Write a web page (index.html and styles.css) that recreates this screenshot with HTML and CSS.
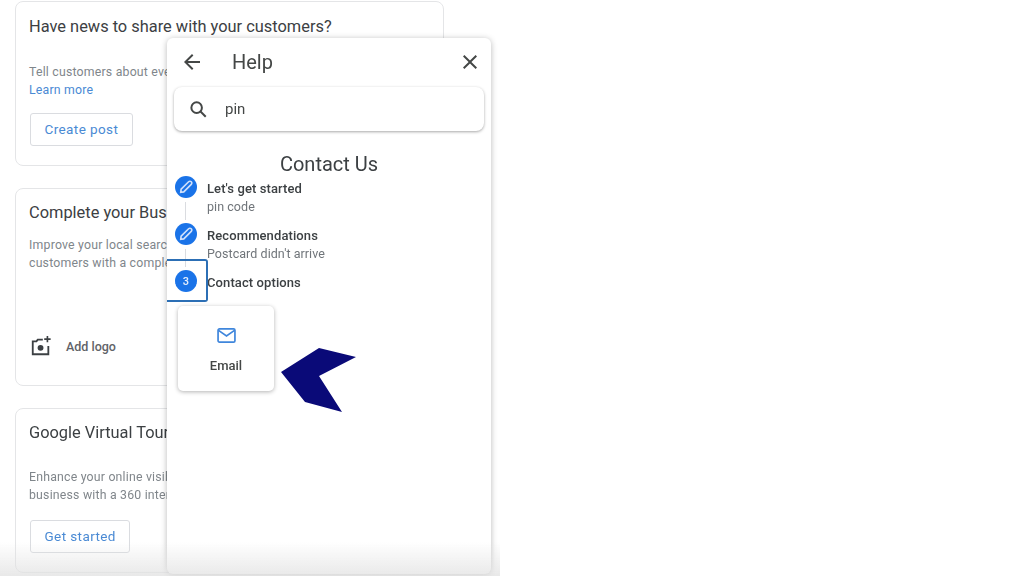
FILE: index.html
```html
<!DOCTYPE html>
<html lang="en">
<head>
    <meta charset="UTF-8">
    <meta name="viewport" content="width=device-width, initial-scale=1.0">
    <title>Help - Contact Us</title>
    <link rel="stylesheet" href="styles.css">
</head>
<body>
    <div class="page">
        <div class="cards">
            <section class="card card-news">
                <h3>Have news to share with your customers?</h3>
                <p class="card-text">Tell customers about events, offers and updates<br><a href="#">Learn more</a></p>
                <a class="btn" href="#">Create post</a>
            </section>
            <section class="card card-profile">
                <h3>Complete your Business Profile</h3>
                <p class="card-text">Improve your local search ranking and attract<br>customers with a complete profile</p>
                <div class="add-logo">
                    <svg viewBox="0 0 24 24" width="22" height="22" fill="none" stroke="#3c4043" stroke-width="2">
                        <path d="M14 5H8.500L7 7H3v14h17v-9"/>
                        <circle cx="11.500" cy="14" r="3.200" fill="#3c4043" stroke="none"/>
                        <path d="M19 1v7M15.500 4.500h7" stroke-width="1.800"/>
                    </svg>
                    <span>Add logo</span>
                </div>
            </section>
            <section class="card card-tour">
                <h3>Google Virtual Tour</h3>
                <p class="card-text">Enhance your online visibility and promote your<br>business with a 360 interactive tour</p>
                <a class="btn" href="#">Get started</a>
            </section>
        </div>

        <aside class="help">
            <header class="help-head">
                <svg viewBox="0 0 24 24" width="24" height="24" fill="#444746"><path d="M20 11H7.800l5.600-5.600L12 4l-8 8 8 8 1.400-1.400L7.800 13H20z"/></svg>
                <h2>Help</h2>
                <svg class="help-close" viewBox="0 0 24 24" width="24" height="24" fill="#444746"><path d="M19 6.400 17.600 5 12 10.600 6.400 5 5 6.400 10.600 12 5 17.600 6.400 19 12 13.400 17.600 19 19 17.600 13.400 12z"/></svg>
            </header>
            <div class="search">
                <svg viewBox="0 0 22 22" width="20" height="20" fill="none" stroke="#444746" stroke-width="2.200"><circle cx="9.500" cy="9.500" r="5.800"/><path d="m13.500 13.500 6 6"/></svg>
                <span>pin</span>
            </div>
            <h1>Contact Us</h1>
            <ol class="steps">
                <li class="step">
                    <span class="step-dot">
                        <svg viewBox="0 0 24 24" width="18" height="18" fill="none" stroke="#cfe0fb" stroke-width="2.200"><path d="M5 19 5.500 15 15.500 5a2 2 0 0 1 3.500 3.500L9 18.500z"/></svg>
                    </span>
                    <div class="step-body">
                        <strong>Let's get started</strong>
                        <span>pin code</span>
                    </div>
                </li>
                <li class="step">
                    <span class="step-dot">
                        <svg viewBox="0 0 24 24" width="18" height="18" fill="none" stroke="#cfe0fb" stroke-width="2.200"><path d="M5 19 5.500 15 15.500 5a2 2 0 0 1 3.500 3.500L9 18.500z"/></svg>
                    </span>
                    <div class="step-body">
                        <strong>Recommendations</strong>
                        <span>Postcard didn't arrive</span>
                    </div>
                </li>
                <li class="step step-current">
                    <span class="step-dot">3</span>
                    <div class="step-body">
                        <strong>Contact options</strong>
                    </div>
                </li>
            </ol>
            <div class="contact-option">
                <svg viewBox="0 0 20 16" width="19" height="15" fill="none" stroke="#3f86dc" stroke-width="1.800"><rect x="1" y="1" width="18" height="14" rx="1.500"/><path d="m1.500 2.500 8.500 6 8.500-6"/></svg>
                <span>Email</span>
            </div>
        </aside>

        <div class="page-fade"></div>

        <svg class="pointer" viewBox="0 0 76 66" width="76" height="66"><path fill="#0a0a78" d="M0 25 38 1 75 10 38 29 61 65 24 55z"/></svg>
    </div>
</body>
</html>
```

FILE: styles.css
```css
* {
    margin: 0;
    padding: 0;
    box-sizing: border-box;
}
body {
    background: #fff;
    font-family: Roboto, Arial, sans-serif;
    color: #3c4043;
    overflow: hidden;
}
a {
    text-decoration: none;
    color: #4a8ad4;
}
.page {
    position: relative;
    width: 1024px;
    height: 576px;
    overflow: hidden;
}
.cards {
    display: flex;
    flex-direction: column;
    gap: 22px;
    width: 429px;
    margin: 1px 0 0 15px;
    filter: blur(0.35px);
}
.card {
    border: 1px solid #e4e5e7;
    border-radius: 8px;
    padding: 14px 14px 0 13px;
    background: #fff;
    white-space: nowrap;
    overflow: hidden;
}
.card-news {
    height: 165px;
    padding-top: 15px;
}
.card-profile {
    height: 198px;
}
.card-tour {
    height: 165px;
}
.card h3 {
    font-size: 16.400px;
    font-weight: 400;
    line-height: 20px;
    color: #3c4043;
}
.card-text {
    margin-top: 25px;
    font-size: 12.300px;
    line-height: 18px;
    color: #80868b;
    letter-spacing: 0.2px;
}
.card-news .card-text {
    margin-top: 27px;
    line-height: 17.500px;
}
.card-profile .card-text {
    margin-top: 13px;
}
.btn {
    display: inline-block;
    margin: 16px 0 0 1px;
    padding: 0 13.500px;
    height: 33px;
    line-height: 31px;
    border: 1px solid #dadce0;
    border-radius: 3px;
    font-size: 13.500px;
    letter-spacing: 0.4px;
    color: #4a8ad4;
}
.card-news .btn {
    margin-top: 14px;
}
.add-logo {
    display: flex;
    align-items: center;
    gap: 14px;
    margin-top: 63px;
    padding-left: 1px;
    font-size: 12.500px;
    font-weight: 500;
    color: #5f6368;
}
.page-fade {
    position: absolute;
    left: 0;
    bottom: 0;
    width: 500px;
    height: 34px;
    background: linear-gradient(rgba(225, 225, 225, 0), rgba(225, 225, 225, 0.75));
    pointer-events: none;
}
.help {
    position: absolute;
    left: 167px;
    top: 38px;
    width: 324px;
    height: 536px;
    background: #fff;
    border-radius: 6px;
    box-shadow: 0 1px 6px rgba(0, 0, 0, 0.28);
    filter: blur(0.3px);
}
.help-head {
    display: flex;
    align-items: center;
    height: 48px;
    padding: 0 9px 0 13px;
}
.help-head h2 {
    margin-left: 28px;
    font-size: 20px;
    font-weight: 400;
    color: #444746;
}
.help-close {
    margin-left: auto;
}
.search {
    display: flex;
    align-items: center;
    gap: 17px;
    height: 44px;
    margin: 1px 7px 0;
    padding-left: 14px;
    border-radius: 8px;
    background: #fff;
    box-shadow: 0 1px 3px rgba(0, 0, 0, 0.35);
    font-size: 15px;
    color: #444746;
}
.help h1 {
    margin-top: 21px;
    text-align: center;
    font-size: 20px;
    font-weight: 400;
    line-height: 24px;
    color: #3c4043;
}
.steps {
    list-style: none;
}
.step {
    position: relative;
    display: flex;
    gap: 10px;
    height: 47px;
    padding-left: 8px;
}
.step:not(:last-child)::after {
    content: "";
    position: absolute;
    left: 18px;
    top: 26px;
    height: 18px;
    width: 1px;
    background: #dadce0;
}
.step-dot {
    display: flex;
    align-items: center;
    justify-content: center;
    flex: none;
    width: 22px;
    height: 22px;
    border-radius: 50%;
    background: #1a73e8;
    color: #e4eefc;
    font-size: 11px;
    font-weight: 500;
}
.step-body {
    display: flex;
    flex-direction: column;
    font-size: 12.500px;
    line-height: 18px;
    padding-top: 4px;
}
.step-body strong {
    font-size: 13px;
    font-weight: 500;
    letter-spacing: 0.1px;
    color: #3c4043;
}
.step-body span {
    letter-spacing: 0.05px;
    color: #70757a;
}
.step-current {
    height: auto;
}
/* focus box around the current step number */
.step-current::before {
    content: "";
    position: absolute;
    left: 0;
    top: -11px;
    width: 39px;
    height: 39px;
    border: 2px solid #2c6fb5;
    border-left: none;
    border-radius: 0 3px 3px 0;
}
.contact-option {
    display: flex;
    flex-direction: column;
    align-items: center;
    gap: 15px;
    width: 96px;
    height: 85px;
    margin: 14px 0 0 11px;
    padding-top: 22px;
    border-radius: 5px;
    background: #fff;
    box-shadow: 0 1px 4px rgba(0, 0, 0, 0.3);
    font-size: 13px;
    font-weight: 500;
    color: #444746;
}
.pointer {
    position: absolute;
    left: 281px;
    top: 347px;
}
```
